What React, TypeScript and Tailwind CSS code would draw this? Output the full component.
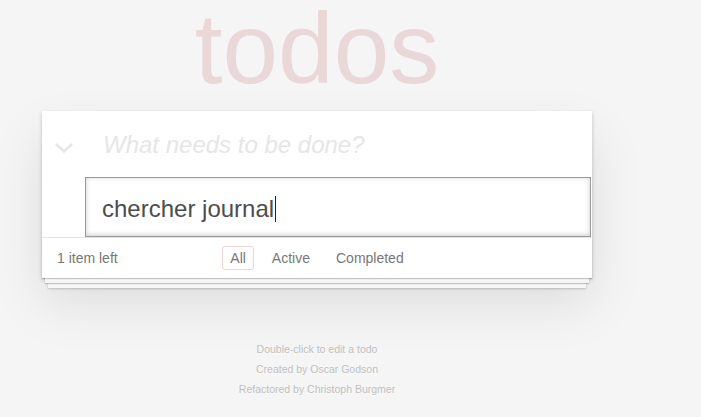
import React from 'react'

const filters = ['All', 'Active', 'Completed']

const ChevronDown = () => (
  <svg width="20" height="12" viewBox="0 0 20 12" fill="none">
    <path d="M2 2 L10 9.5 L18 2" stroke="#e6e6e6" strokeWidth="2.6" />
  </svg>
)

const App = () => {
  return (
    <div className="min-h-[417px] bg-[#f5f5f5] font-['Liberation_Sans',Arial,sans-serif] text-[#4d4d4d]">
      <div className="ml-[42px] w-[550px]">
        <div className="h-[111px]">
          <h1 className="text-center text-[100px] leading-[96px] font-normal text-[rgba(175,47,47,0.15)]">
            todos
          </h1>
        </div>

        <section className="relative isolate bg-white shadow-[0_2px_4px_0_rgba(0,0,0,0.2),0_25px_50px_0_rgba(0,0,0,0.1)]">
          <header className="relative h-[66px] flex items-center">
            <div className="absolute left-[12px] top-[31px]">
              <ChevronDown />
            </div>
            <div className="pl-[61px] pt-[2px] text-[24px] italic text-[#e6e6e6]">What needs to be done?</div>
          </header>

          <ul>
            <li className="h-[60px] pl-[43px]">
              <div className="w-[506px] h-[60px] border border-[#999] shadow-[inset_0_-1px_5px_0_rgba(0,0,0,0.2)] flex items-center pl-[16px] pt-[3px] text-[24px] text-[#4d4d4d]">
                <span>chercher journal</span>
                <span className="inline-block w-px h-[26px] bg-[#222] ml-[1px]" />
              </div>
            </li>
          </ul>

          <footer className="relative h-[41px] border-t border-[#e6e6e6] flex items-center px-[15px] text-[14px] text-[#777]">
            <div className="absolute left-0 right-0 bottom-0 h-[40px] -z-10 shadow-[0_1px_1px_rgba(0,0,0,0.2),0_8px_0_-3px_#f6f6f6,0_9px_1px_-3px_rgba(0,0,0,0.2),0_16px_0_-6px_#f6f6f6,0_17px_2px_-6px_rgba(0,0,0,0.2)]" />
            <span className="relative">1 item left</span>
            <ul className="absolute left-0 right-0 flex justify-center gap-[4px]">
              {filters.map((f) => (
                <li key={f}>
                  <a
                    className={
                      f === 'All'
                        ? 'block m-[3px] px-[7px] py-[3px] rounded-[3px] border border-[rgba(175,47,47,0.2)] leading-[16px]'
                        : 'block m-[3px] px-[7px] py-[3px] rounded-[3px] border border-transparent leading-[16px]'
                    }
                  >
                    {f}
                  </a>
                </li>
              ))}
            </ul>
          </footer>
        </section>

        <div className="mt-[61px] text-center text-[10.5px] leading-[20px] text-[#bfbfbf] [text-shadow:0_1px_0_rgba(255,255,255,0.5)]">
          <p>Double-click to edit a todo</p>
          <p>Created by Oscar Godson</p>
          <p>Refactored by Christoph Burgmer</p>
        </div>
      </div>
    </div>
  )
}

export default App
